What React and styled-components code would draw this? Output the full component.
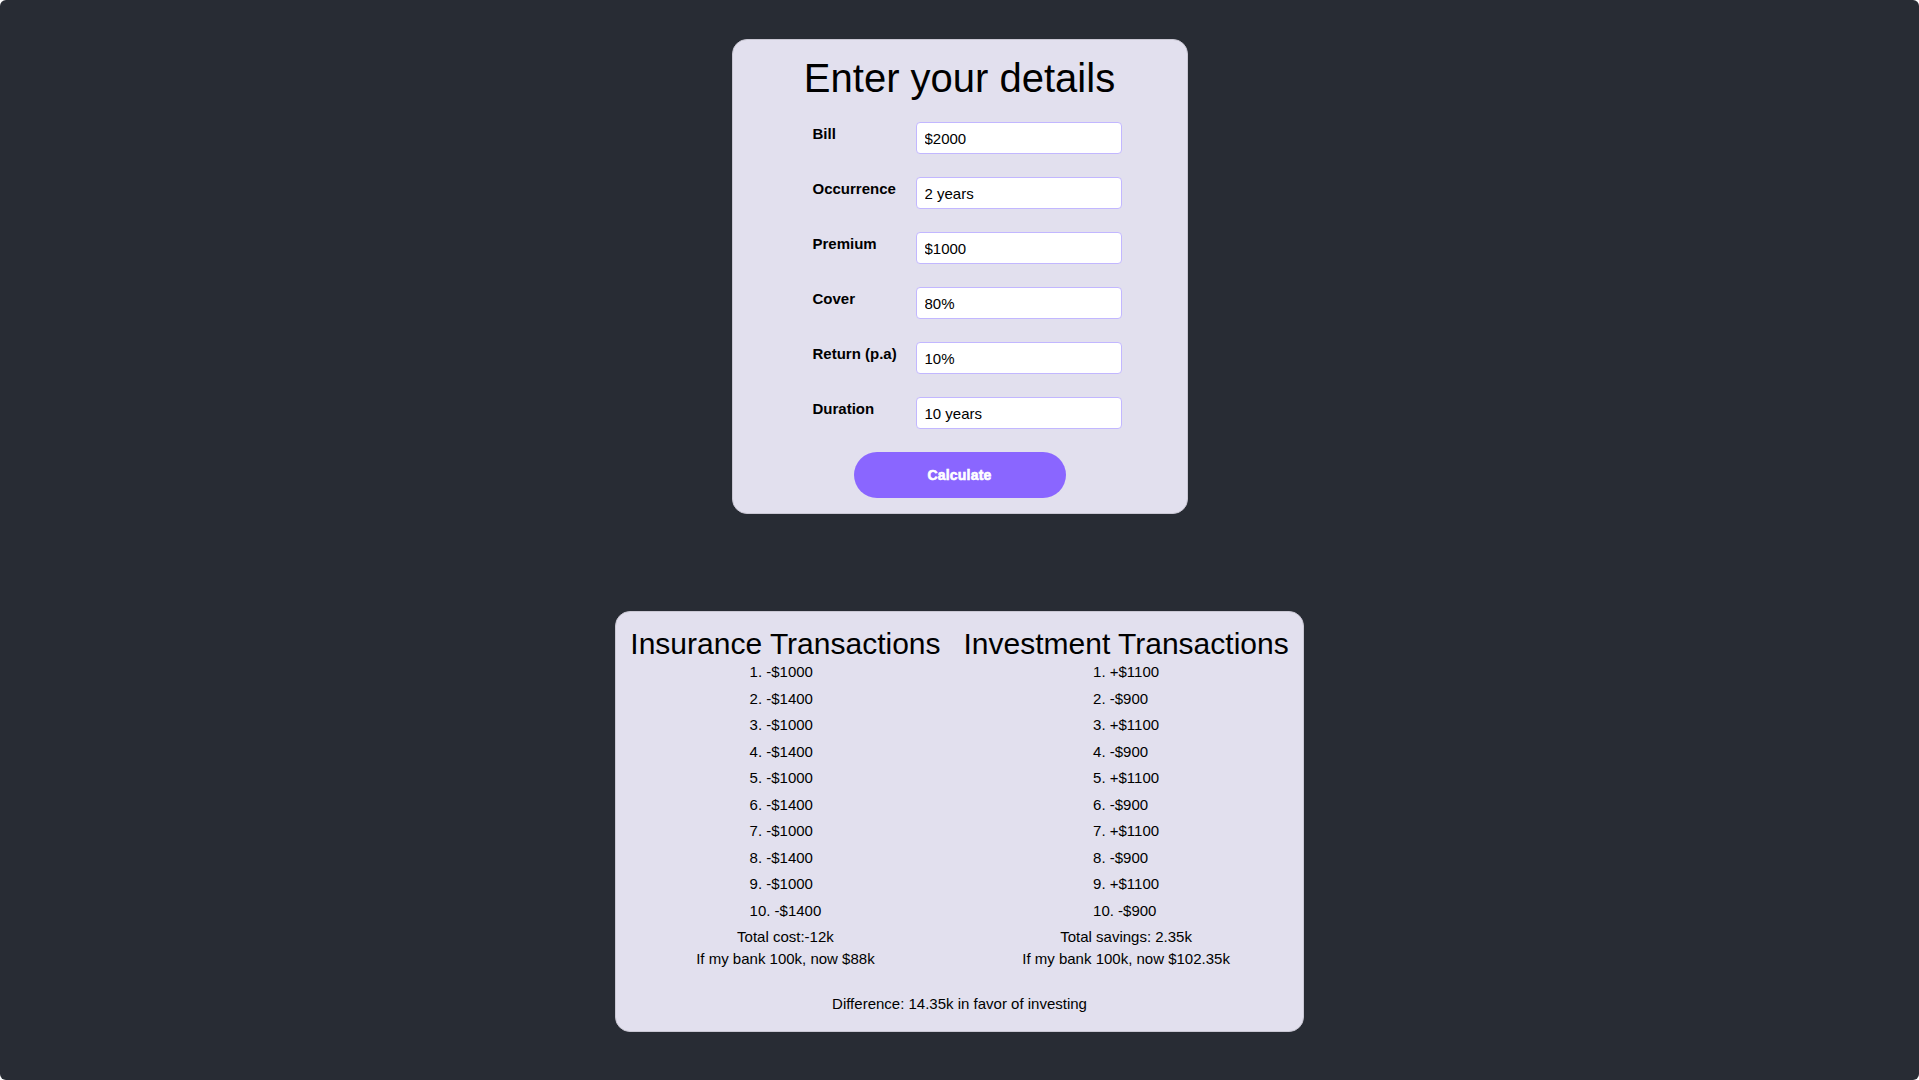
import React from "react";
import styled, { createGlobalStyle } from "styled-components";

const GlobalStyle = createGlobalStyle`
  html, body {
    margin: 0;
    padding: 0;
    background: #ffffff;
  }
  body {
    font-family: "Liberation Sans", Arial, sans-serif;
    color: #000;
  }
`;

const fields = [
  { label: "Bill", value: "$2000" },
  { label: "Occurrence", value: "2 years" },
  { label: "Premium", value: "$1000" },
  { label: "Cover", value: "80%" },
  { label: "Return (p.a)", value: "10%" },
  { label: "Duration", value: "10 years" },
];

const insurance = ["-$1000", "-$1400", "-$1000", "-$1400", "-$1000", "-$1400", "-$1000", "-$1400", "-$1000", "-$1400"];
const investment = ["+$1100", "-$900", "+$1100", "-$900", "+$1100", "-$900", "+$1100", "-$900", "+$1100", "-$900"];

export default function App() {
  return (
    <>
      <GlobalStyle />
      <Page>
        <DetailsCard>
          <Title>Enter your details</Title>
          <Form>
            {fields.map((f) => (
              <Row key={f.label}>
                <Label>{f.label}</Label>
                <Input defaultValue={f.value} />
              </Row>
            ))}
          </Form>
          <CalcButton>Calculate</CalcButton>
        </DetailsCard>

        <ResultsCard>
          <Columns>
            <Column>
              <Heading>Insurance Transactions</Heading>
              <List>
                {insurance.map((t, i) => (
                  <Item key={i}>{i + 1}. {t}</Item>
                ))}
              </List>
              <Totals>
                <div>Total cost:-12k</div>
                <div>If my bank 100k, now $88k</div>
              </Totals>
            </Column>
            <Column>
              <Heading>Investment Transactions</Heading>
              <List>
                {investment.map((t, i) => (
                  <Item key={i}>{i + 1}. {t}</Item>
                ))}
              </List>
              <Totals>
                <div>Total savings: 2.35k</div>
                <div>If my bank 100k, now $102.35k</div>
              </Totals>
            </Column>
          </Columns>
          <Difference>Difference: 14.35k in favor of investing</Difference>
        </ResultsCard>
      </Page>
    </>
  );
}

const Page = styled.div`
  min-height: 100vh;
  box-sizing: border-box;
  background: #282c34;
  border-radius: 6px;
  padding: 39px 0 48px;
  display: flex;
  flex-direction: column;
  align-items: center;
  gap: 97px;
`;

const Card = styled.div`
  box-sizing: border-box;
  background: #e2e0ee;
  border: 1px solid #c9c7d3;
  border-radius: 15px;
`;

const DetailsCard = styled(Card)`
  width: 456px;
  padding: 15px 0;
  display: flex;
  flex-direction: column;
  align-items: center;
`;

const Title = styled.h1`
  margin: 0 0 21px;
  font-size: 40px;
  line-height: 46px;
  font-weight: 400;
`;

const Form = styled.div`
  align-self: stretch;
  padding-left: 80px;
  display: flex;
  flex-direction: column;
  gap: 23px;
`;

const Row = styled.div`
  display: flex;
  align-items: flex-start;
  height: 32px;
`;

const Label = styled.label`
  width: 103px;
  padding-top: 3px;
  font-size: 15px;
  line-height: 17px;
  font-weight: 700;
`;

const Input = styled.input`
  box-sizing: border-box;
  width: 206px;
  height: 32px;
  padding: 0 8px;
  border: 1px solid #c2b7ff;
  border-radius: 4px;
  background: #fff;
  font-family: "Liberation Sans", Arial, sans-serif;
  font-size: 15px;
  color: #000;
  outline: none;
`;

const CalcButton = styled.button`
  margin-top: 23px;
  width: 212px;
  height: 46px;
  border: none;
  border-radius: 23px;
  background: #8a66ff;
  color: #fff;
  font-family: "Liberation Sans", Arial, sans-serif;
  font-size: 14px;
  font-weight: 700;
  -webkit-text-stroke: 0.6px #fff;
  letter-spacing: 0.2px;
  cursor: pointer;
`;

const ResultsCard = styled(Card)`
  width: 689px;
  padding: 17px 16px 16px;
  display: flex;
  flex-direction: column;
  align-items: center;
`;

const Columns = styled.div`
  display: flex;
  justify-content: center;
  gap: 23px;
`;

const Column = styled.div`
  display: flex;
  flex-direction: column;
  align-items: center;
`;

const Heading = styled.h2`
  margin: 0;
  font-size: 30px;
  line-height: 30px;
  font-weight: 400;
  white-space: nowrap;
`;

const List = styled.div`
  text-align: left;
`;

const Item = styled.div`
  font-size: 15px;
  line-height: 26.5px;
`;

const Totals = styled.div`
  margin-top: 2px;
  text-align: center;
  font-size: 15px;
  line-height: 22px;
`;

const Difference = styled.div`
  margin-top: 23px;
  font-size: 15px;
  line-height: 22px;
`;
